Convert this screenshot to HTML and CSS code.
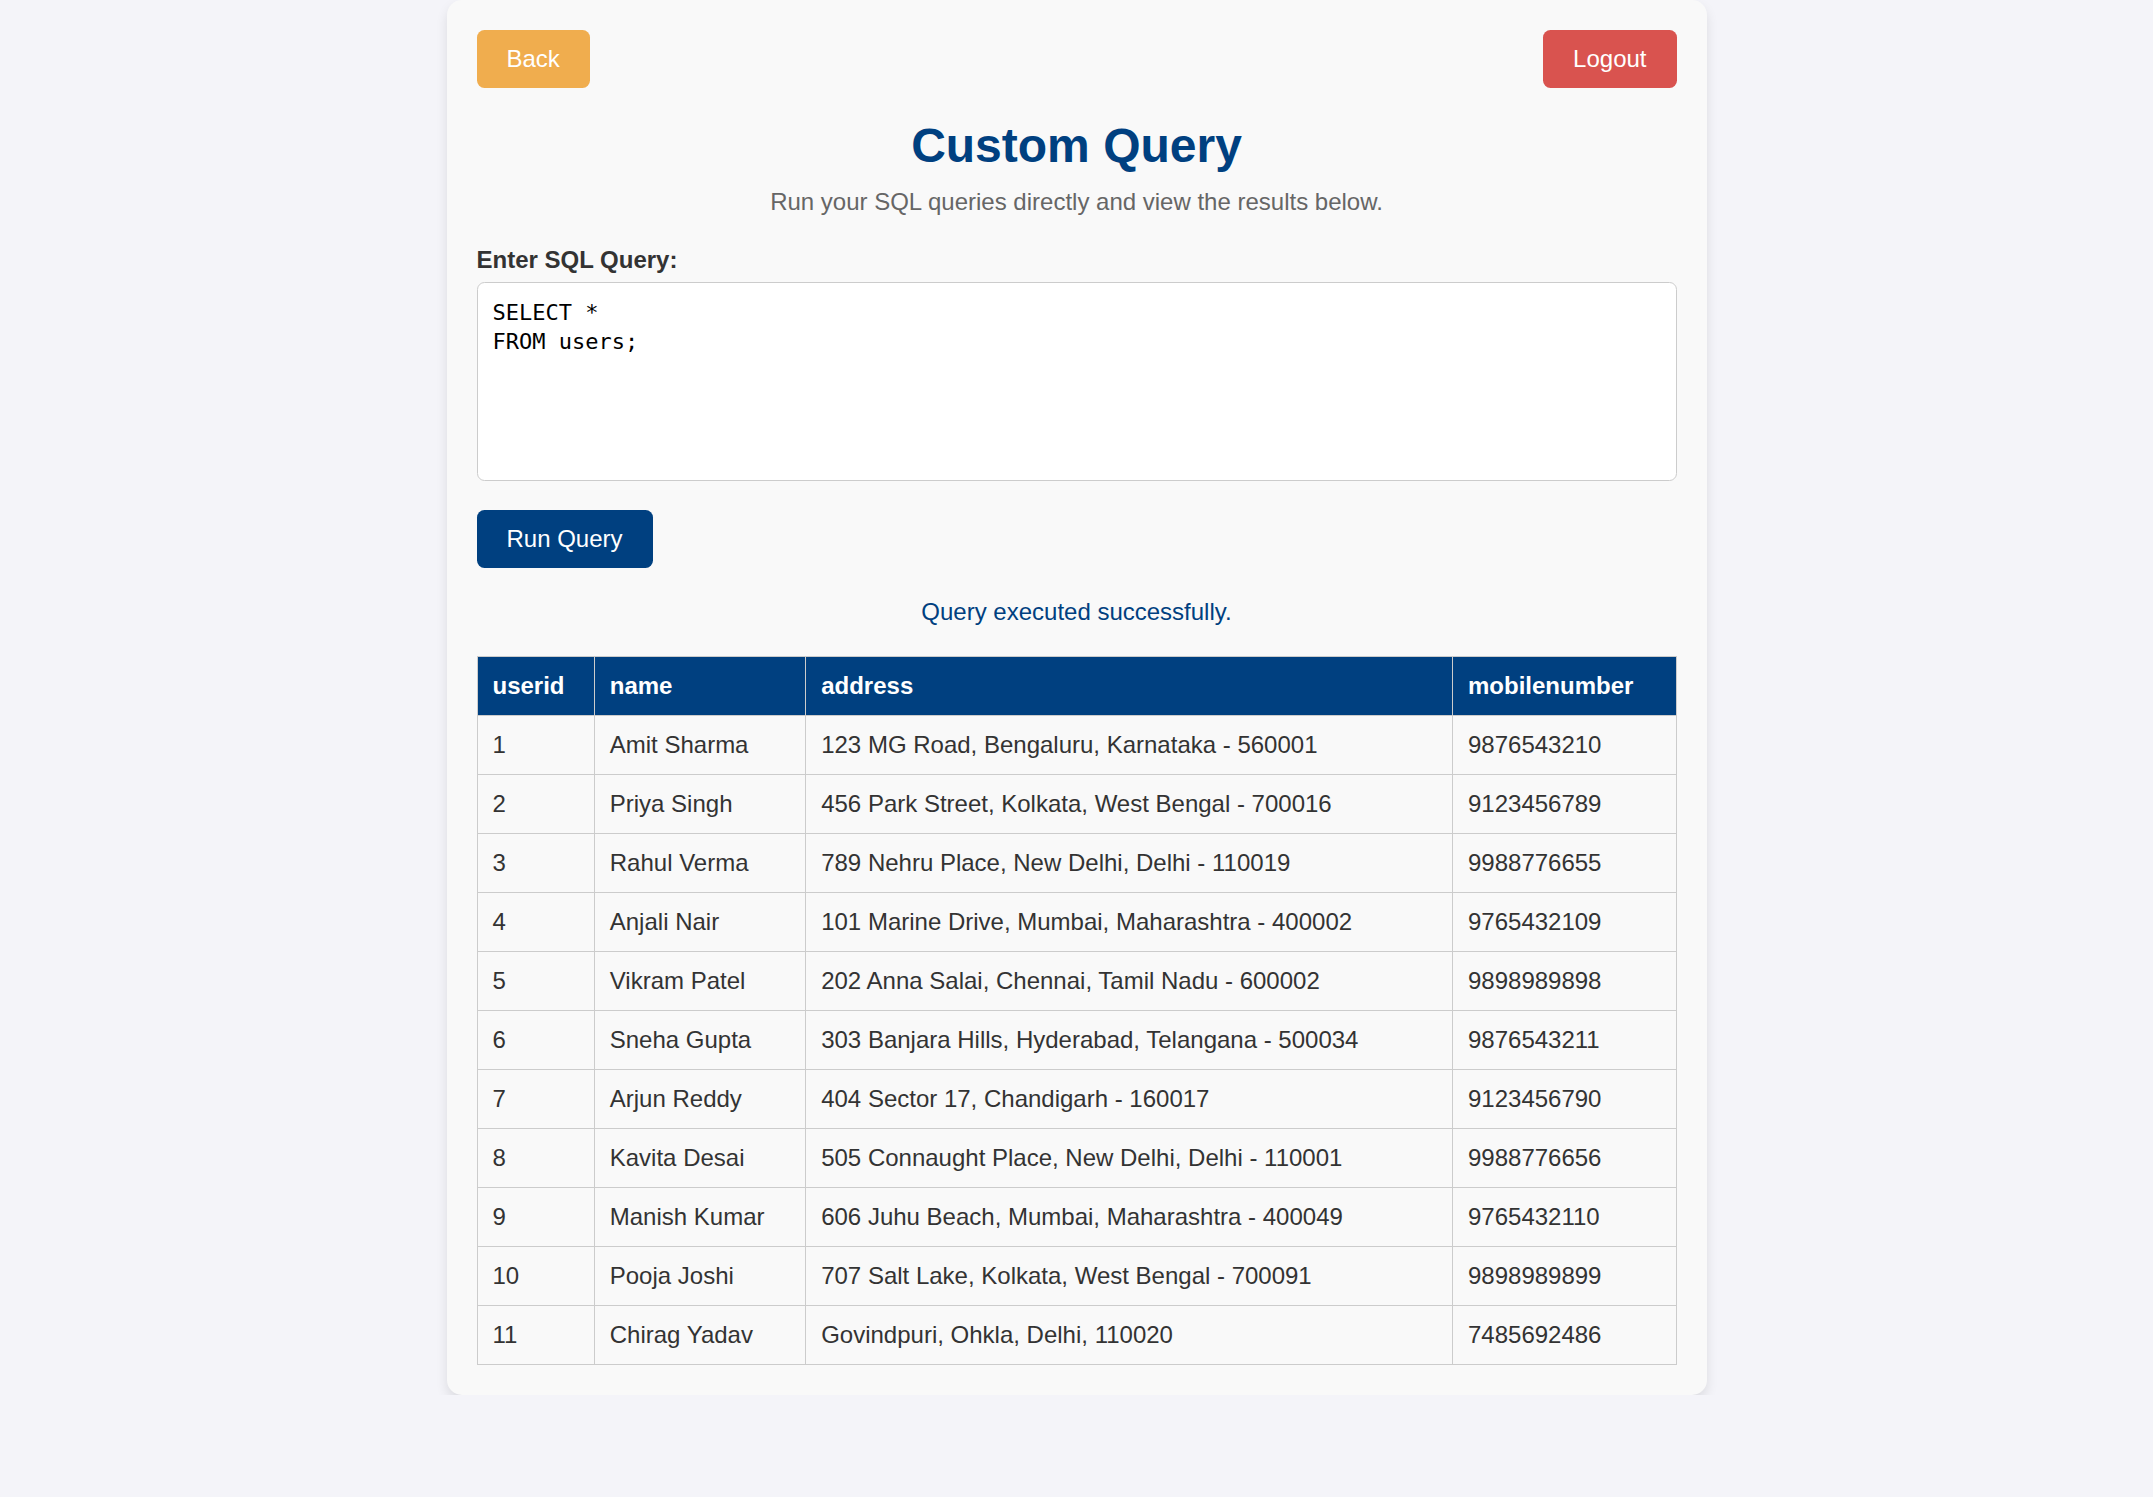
FILE: index.html
```html
<!DOCTYPE html>
<html lang="en">
<head>
<meta charset="UTF-8">
<title>Custom Query</title>
<link rel="stylesheet" href="styles.css">
</head>
<body>
<div class="container">
  <div class="top-bar">
    <button class="btn btn-back">Back</button>
    <button class="btn btn-logout">Logout</button>
  </div>
  <h1 class="title">Custom Query</h1>
  <p class="subtitle">Run your SQL queries directly and view the results below.</p>
  <label class="query-label" for="q">Enter SQL Query:</label>
  <textarea id="q" class="query-input">SELECT *
FROM users;</textarea>
  <div class="actions">
    <button class="btn btn-run">Run Query</button>
  </div>
  <p class="message">Query executed successfully.</p>
  <table class="results">
    <thead>
      <tr><th>userid</th><th>name</th><th>address</th><th>mobilenumber</th></tr>
    </thead>
    <tbody>
      <tr><td>1</td><td>Amit Sharma</td><td>123 MG Road, Bengaluru, Karnataka - 560001</td><td>9876543210</td></tr>
      <tr><td>2</td><td>Priya Singh</td><td>456 Park Street, Kolkata, West Bengal - 700016</td><td>9123456789</td></tr>
      <tr><td>3</td><td>Rahul Verma</td><td>789 Nehru Place, New Delhi, Delhi - 110019</td><td>9988776655</td></tr>
      <tr><td>4</td><td>Anjali Nair</td><td>101 Marine Drive, Mumbai, Maharashtra - 400002</td><td>9765432109</td></tr>
      <tr><td>5</td><td>Vikram Patel</td><td>202 Anna Salai, Chennai, Tamil Nadu - 600002</td><td>9898989898</td></tr>
      <tr><td>6</td><td>Sneha Gupta</td><td>303 Banjara Hills, Hyderabad, Telangana - 500034</td><td>9876543211</td></tr>
      <tr><td>7</td><td>Arjun Reddy</td><td>404 Sector 17, Chandigarh - 160017</td><td>9123456790</td></tr>
      <tr><td>8</td><td>Kavita Desai</td><td>505 Connaught Place, New Delhi, Delhi - 110001</td><td>9988776656</td></tr>
      <tr><td>9</td><td>Manish Kumar</td><td>606 Juhu Beach, Mumbai, Maharashtra - 400049</td><td>9765432110</td></tr>
      <tr><td>10</td><td>Pooja Joshi</td><td>707 Salt Lake, Kolkata, West Bengal - 700091</td><td>9898989899</td></tr>
      <tr><td>11</td><td>Chirag Yadav</td><td>Govindpuri, Ohkla, Delhi, 110020</td><td>7485692486</td></tr>
    </tbody>
  </table>
</div>
</body>
</html>
```
FILE: styles.css
```css
html, body {
  margin: 0;
  padding: 0;
}
body {
  background: #f4f4f9;
  font-family: "Liberation Sans", Arial, sans-serif;
  font-size: 24px;
  color: #333;
}
.container {
  width: 1200px;
  margin: 0 auto;
  padding: 30px;
  background: #f9f9f9;
  border-radius: 15px;
  box-shadow: 0 6px 12px rgba(0, 0, 0, 0.1);
}
.top-bar {
  display: flex;
  justify-content: space-between;
  align-items: center;
}
.btn {
  font-family: "Liberation Sans", Arial, sans-serif;
  font-size: 24px;
  line-height: 28px;
  color: #fff;
  border: none;
  border-radius: 7.5px;
  padding: 15px 30px;
  cursor: pointer;
}
.btn-back { background: #f0ad4e; }
.btn-logout { background: #d9534f; }
.btn-run { background: #004080; }
.title {
  margin: 30px 0 15px;
  text-align: center;
  color: #004080;
  font-size: 48px;
  line-height: 55px;
  font-weight: bold;
}
.subtitle {
  margin: 0 0 30px;
  text-align: center;
  color: #666;
  line-height: 28px;
}
.query-label {
  display: block;
  font-weight: bold;
  color: #333;
  line-height: 28px;
  margin-bottom: 8px;
}
.query-input {
  display: block;
  box-sizing: border-box;
  width: 100%;
  height: 199px;
  padding: 15px;
  border: 1px solid #ccc;
  border-radius: 7.5px;
  background: #fff;
  font-family: "DejaVu Sans Mono", monospace;
  font-size: 22px;
  line-height: 29px;
  color: #000;
  resize: none;
}
.actions {
  margin-top: 29px;
  display: flex;
}
.message {
  margin: 30px 0 30px;
  text-align: center;
  color: #004080;
  line-height: 28px;
}
.results {
  width: 100%;
  border-collapse: collapse;
}
.results th, .results td {
  border: 1px solid #ccc;
  padding: 15px;
  text-align: left;
  line-height: 28px;
}
.results th {
  background: #004080;
  color: #fff;
  font-weight: bold;
}
.results td {
  color: #333;
}
```
